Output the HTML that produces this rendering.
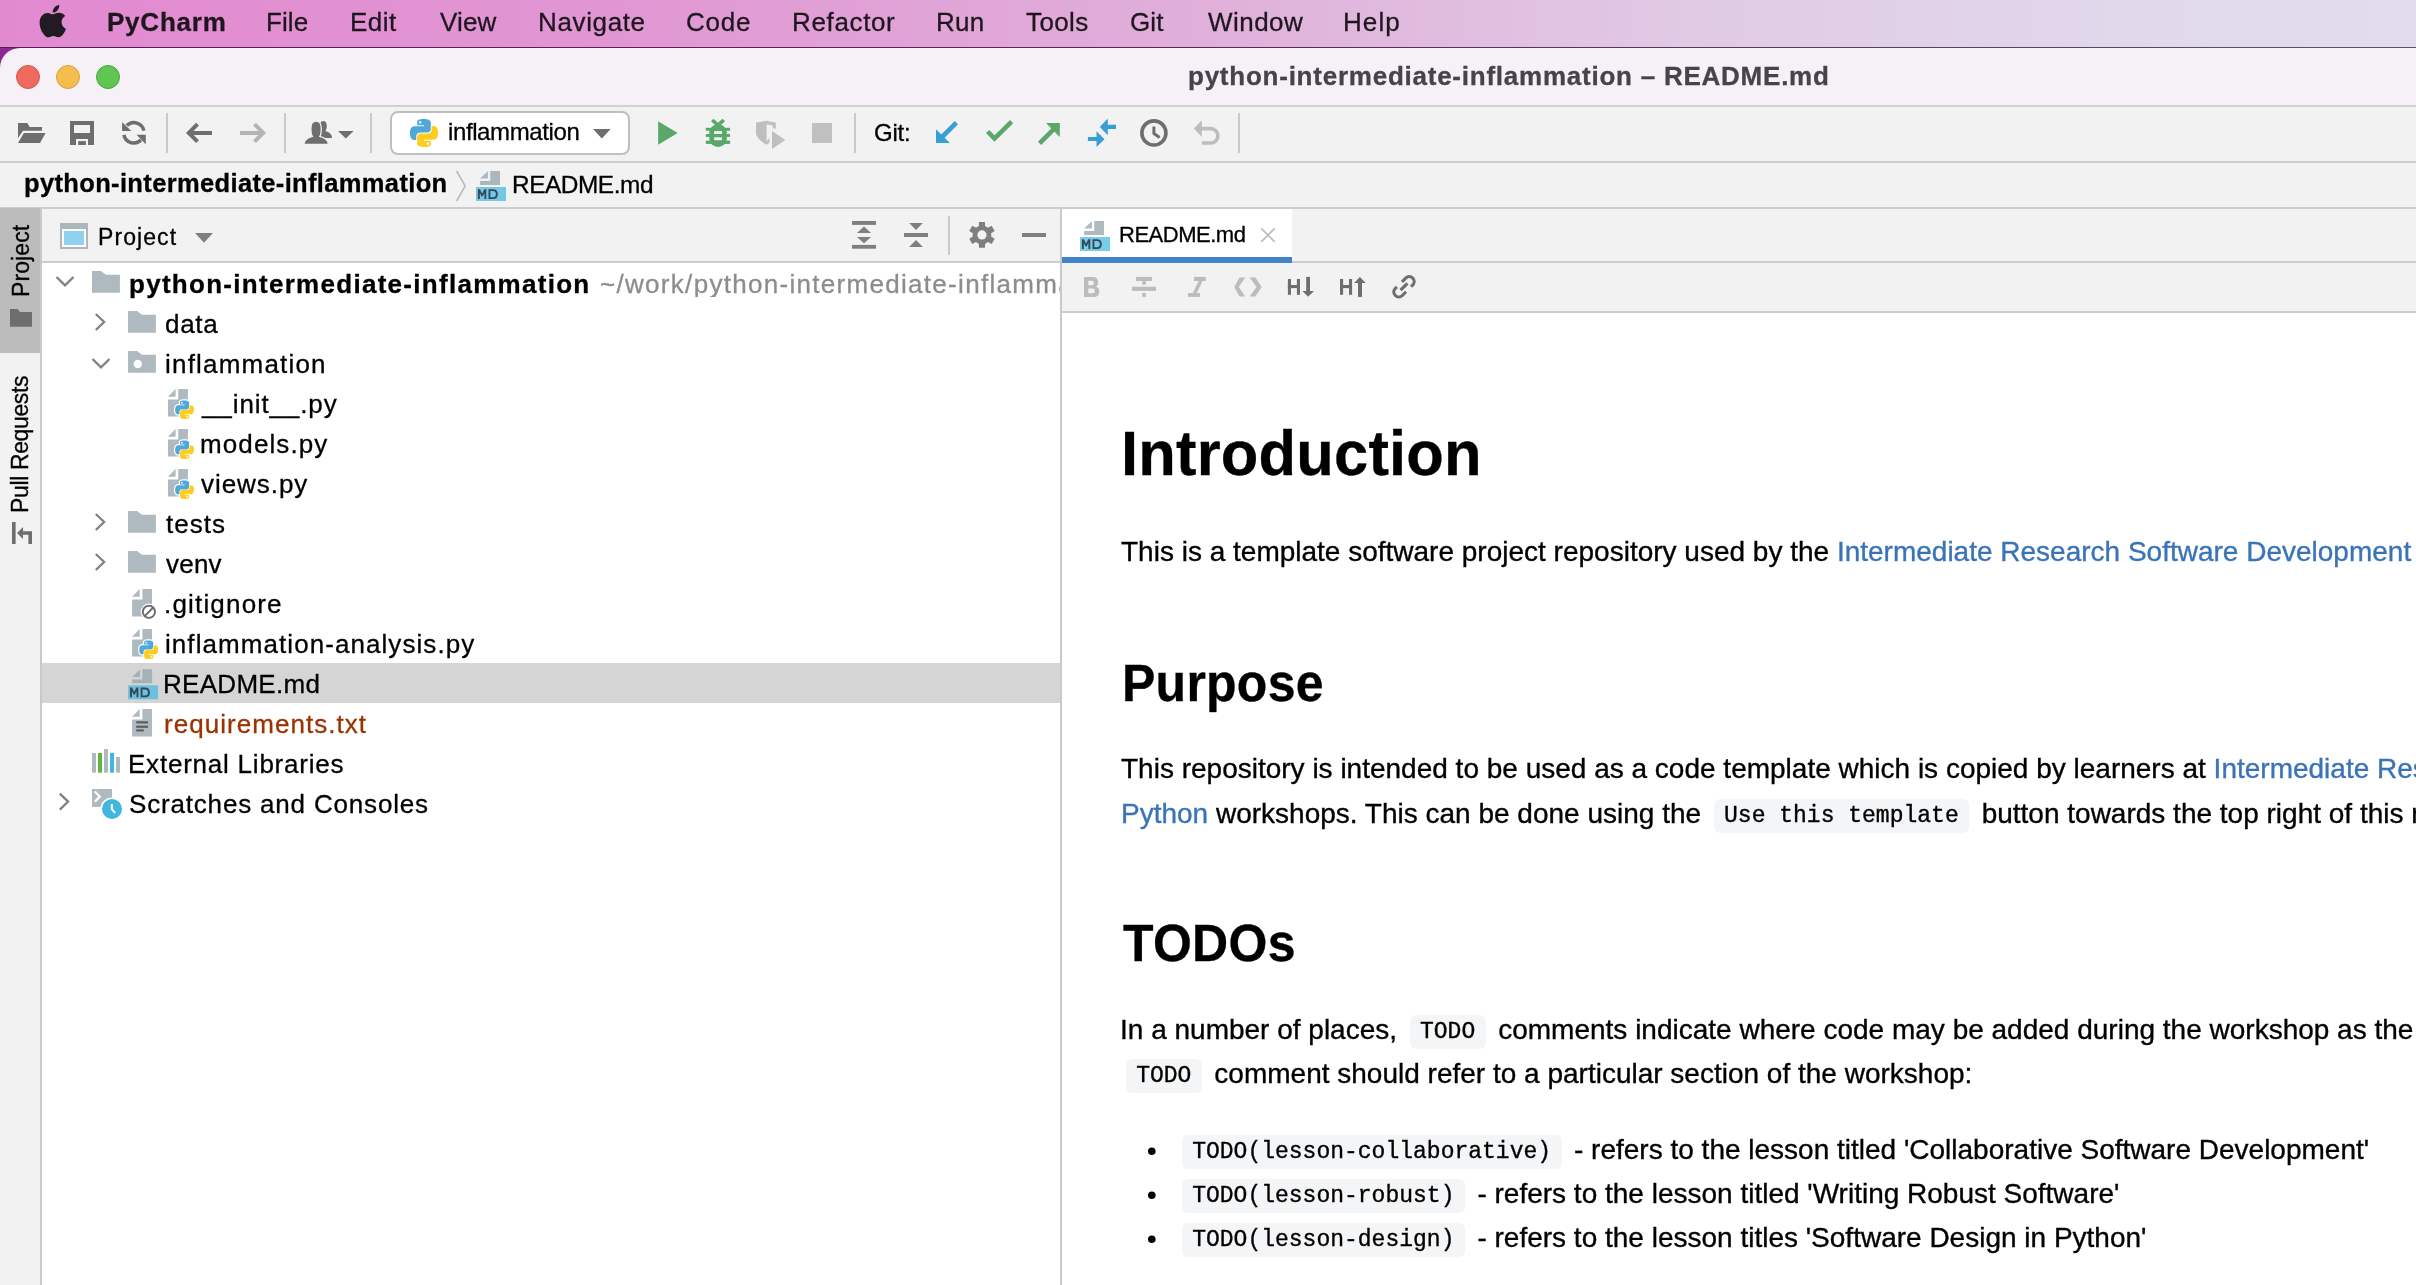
<!DOCTYPE html>
<html><head><meta charset="utf-8"><title>PyCharm</title>
<style>
html,body{margin:0;padding:0;width:2416px;height:1285px;overflow:hidden;background:#ffffff;font-family:"Liberation Sans",sans-serif;}
#root{position:relative;width:2416px;height:1285px;overflow:hidden;}
.t{will-change:transform;-webkit-text-stroke:0.3px currentColor;}
</style></head><body><div id="root">
<div style="position:absolute;left:0px;top:0px;width:2416px;height:48px;background:linear-gradient(90deg,#e28ad0 0%,#e196d3 25%,#e0b0da 50%,#e0cae4 70%,#e1d8ec 88%,#e2dcee 100%);"></div>
<div style="position:absolute;left:0px;top:47px;width:2416px;height:30px;background:linear-gradient(90deg,#8a2a90 0%,#6a2a78 40%,#505064 100%);"></div>
<div style="position:absolute;left:0px;top:46.5px;width:2416px;height:1.5px;background:linear-gradient(90deg,#5a1a5c 0%,#5a2460 50%,#56565e 100%);"></div>
<div class="t" style="position:absolute;left:106.60px;top:8.79px;font-family:'Liberation Sans';font-size:26px;line-height:26px;font-weight:700;color:#1f171f;letter-spacing:0.777px;white-space:pre;">PyCharm</div>
<div class="t" style="position:absolute;left:265.80px;top:8.79px;font-family:'Liberation Sans';font-size:26px;line-height:26px;font-weight:400;color:#1f171f;letter-spacing:0.088px;white-space:pre;">File</div>
<div class="t" style="position:absolute;left:349.70px;top:8.79px;font-family:'Liberation Sans';font-size:26px;line-height:26px;font-weight:400;color:#1f171f;letter-spacing:0.441px;white-space:pre;">Edit</div>
<div class="t" style="position:absolute;left:439.70px;top:8.79px;font-family:'Liberation Sans';font-size:26px;line-height:26px;font-weight:400;color:#1f171f;letter-spacing:0.131px;white-space:pre;">View</div>
<div class="t" style="position:absolute;left:538.00px;top:8.79px;font-family:'Liberation Sans';font-size:26px;line-height:26px;font-weight:400;color:#1f171f;letter-spacing:0.635px;white-space:pre;">Navigate</div>
<div class="t" style="position:absolute;left:686.00px;top:8.79px;font-family:'Liberation Sans';font-size:26px;line-height:26px;font-weight:400;color:#1f171f;letter-spacing:0.801px;white-space:pre;">Code</div>
<div class="t" style="position:absolute;left:791.60px;top:8.79px;font-family:'Liberation Sans';font-size:26px;line-height:26px;font-weight:400;color:#1f171f;letter-spacing:0.642px;white-space:pre;">Refactor</div>
<div class="t" style="position:absolute;left:935.80px;top:8.79px;font-family:'Liberation Sans';font-size:26px;line-height:26px;font-weight:400;color:#1f171f;letter-spacing:0.282px;white-space:pre;">Run</div>
<div class="t" style="position:absolute;left:1026.00px;top:8.79px;font-family:'Liberation Sans';font-size:26px;line-height:26px;font-weight:400;color:#1f171f;letter-spacing:0.376px;white-space:pre;">Tools</div>
<div class="t" style="position:absolute;left:1130.30px;top:8.79px;font-family:'Liberation Sans';font-size:26px;line-height:26px;font-weight:400;color:#1f171f;letter-spacing:0.150px;white-space:pre;">Git</div>
<div class="t" style="position:absolute;left:1207.70px;top:8.79px;font-family:'Liberation Sans';font-size:26px;line-height:26px;font-weight:400;color:#1f171f;letter-spacing:0.461px;white-space:pre;">Window</div>
<div class="t" style="position:absolute;left:1343.20px;top:8.79px;font-family:'Liberation Sans';font-size:26px;line-height:26px;font-weight:400;color:#1f171f;letter-spacing:1.096px;white-space:pre;">Help</div>
<div style="position:absolute;left:0px;top:48px;width:2416px;height:58px;background:#f6f1f7;border-top-left-radius:20px;"></div>
<div style="position:absolute;left:0px;top:105px;width:2416px;height:2px;background:#d3d0d4;"></div>
<div class="t" style="position:absolute;left:1188.00px;top:63.39px;font-family:'Liberation Sans';font-size:26px;line-height:26px;font-weight:700;color:#46434a;letter-spacing:0.761px;white-space:pre;">python-intermediate-inflammation – README.md</div>
<div style="position:absolute;left:0px;top:107px;width:2416px;height:55px;background:#f2f2f2;"></div>
<div style="position:absolute;left:0px;top:161px;width:2416px;height:2px;background:#cdcdcd;"></div>
<div style="position:absolute;left:166px;top:113px;width:2px;height:40px;background:#c9c9c9;"></div>
<div style="position:absolute;left:284px;top:113px;width:2px;height:40px;background:#c9c9c9;"></div>
<div style="position:absolute;left:370px;top:113px;width:2px;height:40px;background:#c9c9c9;"></div>
<div style="position:absolute;left:390px;top:111.2px;width:236px;height:40px;background:#fff;border:2px solid #bfbfbf;border-radius:8px;"></div>
<div class="t" style="position:absolute;left:447.60px;top:120.08px;font-family:'Liberation Sans';font-size:24px;line-height:24px;font-weight:400;color:#000;letter-spacing:-0.392px;white-space:pre;">inflammation</div>
<div style="position:absolute;left:854px;top:113px;width:2px;height:40px;background:#c9c9c9;"></div>
<div class="t" style="position:absolute;left:874.00px;top:120.58px;font-family:'Liberation Sans';font-size:24px;line-height:24px;font-weight:400;color:#000;letter-spacing:-0.223px;white-space:pre;">Git:</div>
<div style="position:absolute;left:1238px;top:113px;width:2px;height:40px;background:#c9c9c9;"></div>
<div style="position:absolute;left:0px;top:163px;width:2416px;height:45px;background:#f2f2f2;"></div>
<div style="position:absolute;left:0px;top:207px;width:2416px;height:2px;background:#cdcdcd;"></div>
<div class="t" style="position:absolute;left:23.80px;top:171.21px;font-family:'Liberation Sans';font-size:25.5px;line-height:25.5px;font-weight:700;color:#000;letter-spacing:0.352px;white-space:pre;">python-intermediate-inflammation</div>
<div class="t" style="position:absolute;left:511.60px;top:172.65px;font-family:'Liberation Sans';font-size:24.4px;line-height:24.4px;font-weight:400;color:#000;letter-spacing:-0.443px;white-space:pre;">README.md</div>
<div style="position:absolute;left:0px;top:209px;width:40px;height:1076px;background:#f2f2f2;"></div>
<div style="position:absolute;left:40px;top:209px;width:2px;height:1076px;background:#c9c9c9;"></div>
<div style="position:absolute;left:0px;top:208px;width:40px;height:144.5px;background:#bcbcbc;"></div>
<div class="t" style="position:absolute;left:9.53px;top:296.80px;transform-origin:0 0;transform:rotate(-90deg);font-family:'Liberation Sans';font-size:23px;line-height:23px;font-weight:400;color:#000;letter-spacing:0.101px;white-space:pre;">Project</div>
<div class="t" style="position:absolute;left:9.13px;top:512.50px;transform-origin:0 0;transform:rotate(-90deg);font-family:'Liberation Sans';font-size:23px;line-height:23px;font-weight:400;color:#000;letter-spacing:-0.367px;white-space:pre;">Pull Requests</div>
<div style="position:absolute;left:42px;top:209px;width:1018px;height:52px;background:#f2f2f2;"></div>
<div style="position:absolute;left:42px;top:261px;width:1018px;height:2px;background:#cdcdcd;"></div>
<div style="position:absolute;left:42px;top:263px;width:1018px;height:1022px;background:#ffffff;"></div>
<div style="position:absolute;left:1060px;top:209px;width:2px;height:1076px;background:#c9c9c9;"></div>
<div class="t" style="position:absolute;left:98.30px;top:225.73px;font-family:'Liberation Sans';font-size:23px;line-height:23px;font-weight:400;color:#000;letter-spacing:1.085px;white-space:pre;">Project</div>
<div style="position:absolute;left:948px;top:216px;width:2px;height:38.5px;background:#c9c9c9;"></div>
<div style="position:absolute;left:42px;top:663px;width:1018px;height:40px;background:#d5d5d5;"></div>
<div class="t" style="position:absolute;left:129.30px;top:270.79px;font-family:'Liberation Sans';font-size:26px;line-height:26px;font-weight:700;color:#000;letter-spacing:1.285px;white-space:pre;">python-intermediate-inflammation</div>
<div class="t" style="position:absolute;left:164.70px;top:310.79px;font-family:'Liberation Sans';font-size:26px;line-height:26px;font-weight:400;color:#000;letter-spacing:0.719px;white-space:pre;">data</div>
<div class="t" style="position:absolute;left:164.70px;top:350.79px;font-family:'Liberation Sans';font-size:26px;line-height:26px;font-weight:400;color:#000;letter-spacing:1.197px;white-space:pre;">inflammation</div>
<div class="t" style="position:absolute;left:202.30px;top:390.79px;font-family:'Liberation Sans';font-size:26px;line-height:26px;font-weight:400;color:#000;letter-spacing:0.894px;white-space:pre;">__init__.py</div>
<div class="t" style="position:absolute;left:200.30px;top:430.79px;font-family:'Liberation Sans';font-size:26px;line-height:26px;font-weight:400;color:#000;letter-spacing:1.100px;white-space:pre;">models.py</div>
<div class="t" style="position:absolute;left:201.30px;top:470.79px;font-family:'Liberation Sans';font-size:26px;line-height:26px;font-weight:400;color:#000;letter-spacing:0.943px;white-space:pre;">views.py</div>
<div class="t" style="position:absolute;left:166.10px;top:510.79px;font-family:'Liberation Sans';font-size:26px;line-height:26px;font-weight:400;color:#000;letter-spacing:1.023px;white-space:pre;">tests</div>
<div class="t" style="position:absolute;left:166.10px;top:550.79px;font-family:'Liberation Sans';font-size:26px;line-height:26px;font-weight:400;color:#000;letter-spacing:0.227px;white-space:pre;">venv</div>
<div class="t" style="position:absolute;left:164.10px;top:590.79px;font-family:'Liberation Sans';font-size:26px;line-height:26px;font-weight:400;color:#000;letter-spacing:1.178px;white-space:pre;">.gitignore</div>
<div class="t" style="position:absolute;left:165.10px;top:630.79px;font-family:'Liberation Sans';font-size:26px;line-height:26px;font-weight:400;color:#000;letter-spacing:1.067px;white-space:pre;">inflammation-analysis.py</div>
<div class="t" style="position:absolute;left:163.40px;top:670.79px;font-family:'Liberation Sans';font-size:26px;line-height:26px;font-weight:400;color:#000;letter-spacing:0.285px;white-space:pre;">README.md</div>
<div class="t" style="position:absolute;left:164.40px;top:710.79px;font-family:'Liberation Sans';font-size:26px;line-height:26px;font-weight:400;color:#993300;letter-spacing:1.041px;white-space:pre;">requirements.txt</div>
<div class="t" style="position:absolute;left:127.90px;top:750.79px;font-family:'Liberation Sans';font-size:26px;line-height:26px;font-weight:400;color:#000;letter-spacing:0.776px;white-space:pre;">External Libraries</div>
<div class="t" style="position:absolute;left:128.90px;top:790.79px;font-family:'Liberation Sans';font-size:26px;line-height:26px;font-weight:400;color:#000;letter-spacing:0.823px;white-space:pre;">Scratches and Consoles</div>
<div class="t" style="position:absolute;left:600.40px;top:270.79px;font-family:'Liberation Sans';font-size:26px;line-height:26px;font-weight:400;color:#8c8c8c;letter-spacing:1.300px;white-space:pre;width:459.60px;overflow:hidden;">~/work/python-intermediate-inflammation</div>
<div style="position:absolute;left:1062px;top:209px;width:1354px;height:52px;background:#f2f2f2;"></div>
<div style="position:absolute;left:1062px;top:261px;width:1354px;height:2px;background:#cdcdcd;"></div>
<div style="position:absolute;left:1062px;top:209px;width:230px;height:48.5px;background:#ffffff;"></div>
<div style="position:absolute;left:1062px;top:257.3px;width:230px;height:5.4px;background:#4083c9;"></div>
<div class="t" style="position:absolute;left:1118.50px;top:224.38px;font-family:'Liberation Sans';font-size:22px;line-height:22px;font-weight:400;color:#000;letter-spacing:-0.483px;white-space:pre;">README.md</div>
<div style="position:absolute;left:1062px;top:263px;width:1354px;height:48px;background:#f2f2f2;"></div>
<div style="position:absolute;left:1062px;top:311px;width:1354px;height:2px;background:#cdcdcd;"></div>
<div style="position:absolute;left:1062px;top:313px;width:1354px;height:972px;background:#ffffff;"></div>
<div class="t" style="position:absolute;left:1121.20px;top:423.34px;font-family:'Liberation Sans';font-size:61.5px;line-height:61.5px;font-weight:700;color:#000;letter-spacing:0.182px;white-space:pre;transform-origin:0 52.06px;transform:scaleY(1.035);">Introduction</div>
<div class="t" style="position:absolute;left:1121px;top:529.50px;font-family:'Liberation Sans';font-size:28px;line-height:44px;color:#000;white-space:pre;-webkit-text-stroke:0.35px currentColor">This is a template software project repository used by the <span style="color:#3a73b7">Intermediate Research Software Development</span></div>
<div class="t" style="position:absolute;left:1122.00px;top:659.38px;font-family:'Liberation Sans';font-size:50px;line-height:50px;font-weight:700;color:#000;letter-spacing:0.243px;white-space:pre;transform-origin:0 42.33px;transform:scaleY(1.05);">Purpose</div>
<div class="t" style="position:absolute;left:1121px;top:747.30px;font-family:'Liberation Sans';font-size:28px;line-height:44px;color:#000;white-space:pre;-webkit-text-stroke:0.35px currentColor">This repository is intended to be used as a code template which is copied by learners at <span style="color:#3a73b7">Intermediate Research Software Development in</span></div>
<div class="t" style="position:absolute;left:1121px;top:791.50px;font-family:'Liberation Sans';font-size:28px;line-height:44px;color:#000;white-space:pre;-webkit-text-stroke:0.35px currentColor"><span style="color:#3a73b7">Python</span> workshops. This can be done using the <span style="display:inline-block;background:#f4f5f7;border-radius:6px;padding:0 10.5px;margin:0 4.7px;height:34px;line-height:34px;font-family:'Liberation Mono';font-size:23px;vertical-align:1.3px">Use this template</span> button towards the top right of this repository.</div>
<div class="t" style="position:absolute;left:1122.80px;top:919.17px;font-family:'Liberation Sans';font-size:50px;line-height:50px;font-weight:700;color:#000;letter-spacing:0.292px;white-space:pre;transform-origin:0 42.33px;transform:scaleY(1.05);">TODOs</div>
<div class="t" style="position:absolute;left:1120px;top:1007.50px;font-family:'Liberation Sans';font-size:28px;line-height:44px;color:#000;white-space:pre;-webkit-text-stroke:0.35px currentColor">In a number of places, <span style="display:inline-block;background:#f4f5f7;border-radius:6px;padding:0 10.5px;margin:0 4.7px;height:34px;line-height:34px;font-family:'Liberation Mono';font-size:23px;vertical-align:1.3px">TODO</span> comments indicate where code may be added during the workshop as the workshop progresses.</div>
<div class="t" style="position:absolute;left:1121px;top:1051.50px;font-family:'Liberation Sans';font-size:28px;line-height:44px;color:#000;white-space:pre;-webkit-text-stroke:0.35px currentColor"><span style="display:inline-block;background:#f4f5f7;border-radius:6px;padding:0 10.5px;margin:0 4.7px;height:34px;line-height:34px;font-family:'Liberation Mono';font-size:23px;vertical-align:1.3px">TODO</span> comment should refer to a particular section of the workshop:</div>
<div class="t" style="position:absolute;left:1177px;top:1128.30px;font-family:'Liberation Sans';font-size:28px;line-height:44px;color:#000;white-space:pre;-webkit-text-stroke:0.35px currentColor"><span style="display:inline-block;background:#f4f5f7;border-radius:6px;padding:0 10.5px;margin:0 4.7px;height:34px;line-height:34px;font-family:'Liberation Mono';font-size:23px;vertical-align:1.3px">TODO(lesson-collaborative)</span> - refers to the lesson titled 'Collaborative Software Development'</div>
<div class="t" style="position:absolute;left:1177px;top:1172.30px;font-family:'Liberation Sans';font-size:28px;line-height:44px;color:#000;white-space:pre;-webkit-text-stroke:0.35px currentColor"><span style="display:inline-block;background:#f4f5f7;border-radius:6px;padding:0 10.5px;margin:0 4.7px;height:34px;line-height:34px;font-family:'Liberation Mono';font-size:23px;vertical-align:1.3px">TODO(lesson-robust)</span> - refers to the lesson titled 'Writing Robust Software'</div>
<div class="t" style="position:absolute;left:1177px;top:1216.30px;font-family:'Liberation Sans';font-size:28px;line-height:44px;color:#000;white-space:pre;-webkit-text-stroke:0.35px currentColor"><span style="display:inline-block;background:#f4f5f7;border-radius:6px;padding:0 10.5px;margin:0 4.7px;height:34px;line-height:34px;font-family:'Liberation Mono';font-size:23px;vertical-align:1.3px">TODO(lesson-design)</span> - refers to the lesson titles 'Software Design in Python'</div>
<svg style="position:absolute;left:0;top:0" width="2416" height="1285" viewBox="0 0 2416 1285">
<g transform="translate(36.6,5) scale(1.35)"><path fill="#231b23" d="M12.152 6.896c-.948 0-2.415-1.078-3.96-1.04-2.04.027-3.91 1.183-4.961 3.014-2.117 3.675-.546 9.103 1.519 12.09 1.013 1.454 2.208 3.09 3.792 3.039 1.52-.065 2.09-.987 3.935-.987 1.831 0 2.35.987 3.96.948 1.637-.026 2.676-1.48 3.676-2.948 1.156-1.688 1.636-3.325 1.662-3.415-.039-.013-3.182-1.221-3.22-4.857-.026-3.04 2.48-4.494 2.597-4.559-1.429-2.09-3.623-2.324-4.39-2.376-2-.156-3.675 1.09-4.61 1.09zM15.53 3.83c.843-1.012 1.4-2.427 1.245-3.83-1.207.052-2.662.805-3.532 1.818-.78.896-1.454 2.338-1.273 3.714 1.338.104 2.715-.688 3.559-1.701"/></g>
<circle cx="28" cy="77" r="11.5" fill="#ee6a5f" stroke="#d8564b" stroke-width="1"/>
<circle cx="68" cy="77" r="11.5" fill="#f5bd4f" stroke="#d9a13a" stroke-width="1"/>
<circle cx="108" cy="77" r="11.5" fill="#61c554" stroke="#45a63c" stroke-width="1"/>
<path fill="#6e6e6e" d="M18 123.1H27.4L29.6 127H42V130.7H23L18 138.1Z"/>
<path fill="#6e6e6e" d="M23.9 133.1H45.6L40 142.9H18Z"/>
<path fill="#6e6e6e" fill-rule="evenodd" d="M70 121H94V145H70ZM74 125V133H90V125ZM76 139V145H88V139Z"/>
<rect x="78.2" y="141.1" width="7.7" height="3.9" fill="#6e6e6e"/>
<path fill="none" stroke="#6e6e6e" stroke-width="3.5" d="M143.9 130.7A10.15 10.15 0 0 0 126.8 125.6"/>
<path fill="#6e6e6e" d="M122.1 122V131.1H131.2Z"/>
<path fill="none" stroke="#6e6e6e" stroke-width="3.5" d="M123.9 134.8A10.15 10.15 0 0 0 141 140.1"/>
<path fill="#6e6e6e" d="M145.8 134.8V144.2L136.5 134.8Z"/>
<path fill="none" stroke="#6e6e6e" stroke-width="4" d="M189 132.9H212M197.5 124.2L188.8 132.9L197.5 141.6"/>
<path fill="none" stroke="#b4b4b4" stroke-width="4" d="M240 132.9H263M254.5 124.2L263.2 132.9L254.5 141.6"/>
<path fill="#6e6e6e" d="M320.6 122.2C321.6 121.3 322.6 120.9 323.6 120.9C325.8 120.9 326.8 123.2 326.8 126.2C326.8 128.4 326.2 129.8 325.3 130.9C329.3 132 332 134.2 332 137.9H321Z"/>
<path fill="#6e6e6e" stroke="#f2f2f2" stroke-width="1.3" d="M303.9 144.3C303.9 140 307.5 137.8 312.4 136.4C311.2 134.8 310.9 132.2 310.9 128.2C310.9 124 313.1 121.1 316.1 121.1C319.1 121.1 321.3 124 321.3 128.2C321.3 132.2 321 134.8 319.8 136.4C324.7 137.8 328.4 140 328.4 144.3Z"/>
<path fill="#6e6e6e" d="M338 131H353.6L345.8 138.5Z"/>
<g transform="translate(410,119) scale(1.1667)"><path d="M14.25.18l.9.2.73.26.59.3.45.32.34.34.25.34.16.33.1.3.04.26.02.2-.01.13V8.5l-.05.63-.13.55-.21.46-.26.38-.3.31-.33.25-.35.19-.35.14-.33.1-.3.07-.26.04-.21.02H8.77l-.69.05-.59.14-.5.22-.41.27-.33.32-.27.35-.2.36-.15.37-.1.35-.07.32-.04.27-.02.21v3.06H3.17l-.21-.03-.28-.07-.32-.12-.35-.18-.36-.26-.36-.36-.35-.46-.32-.59-.28-.73-.21-.88-.14-1.05-.05-1.23.06-1.22.16-1.04.24-.87.32-.71.36-.57.4-.44.42-.33.42-.24.4-.16.36-.1.32-.05.24-.01h.16l.06.01h8.16v-.83H6.18l-.01-2.75-.02-.37.05-.34.11-.31.17-.28.25-.26.31-.23.38-.2.44-.18.51-.15.58-.12.64-.1.71-.06.77-.04.84-.02 1.27.05zm-6.3 1.98l-.23.33-.08.41.08.41.23.34.33.22.41.09.41-.09.33-.22.23-.34.08-.41-.08-.41-.23-.33-.33-.22-.41-.09-.41.09z" fill="#4fa8d8" fill-rule="evenodd"/><path d="M21.04 6.11l.28.06.32.12.35.18.36.27.36.35.35.47.32.59.28.73.21.88.14 1.04.05 1.23-.06 1.23-.16 1.04-.24.86-.32.71-.36.57-.4.45-.42.33-.42.24-.4.16-.36.09-.32.05-.24.02-.16-.01h-8.22v.82h5.84l.01 2.76.02.36-.05.34-.11.31-.17.29-.25.25-.31.24-.38.2-.44.17-.51.15-.58.13-.64.09-.71.07-.77.04-.84.01-1.27-.04-1.07-.14-.9-.2-.73-.25-.59-.3-.45-.33-.34-.34-.25-.34-.16-.33-.1-.3-.04-.25-.02-.2.01-.13v-5.34l.05-.64.13-.54.21-.46.26-.38.3-.32.33-.24.35-.2.35-.14.33-.1.3-.06.26-.04.21-.02.13-.01h5.84l.69-.05.59-.14.5-.21.41-.28.33-.32.27-.35.2-.36.15-.36.1-.35.07-.32.04-.28.02-.21V6.07h2.09l.14.01zm-6.47 14.25l-.23.33-.08.41.08.41.23.33.33.23.41.08.41-.08.33-.23.23-.33.08-.41-.08-.41-.23-.33-.33-.23-.41-.08-.41.08z" fill="#fecd1f" fill-rule="evenodd"/></g>
<path fill="#6e6e6e" d="M593 129H610.7L601.85 138.5Z"/>
<path fill="#59a869" d="M658.1 121.2L677.7 133L658.1 144.8Z"/>
<g fill="#59a869"><rect x="709.3" y="124.3" width="17.5" height="22.6" rx="8.75" ry="8"/><rect x="705.8" y="127.8" width="24.3" height="2.9"/><rect x="705.8" y="134" width="24.3" height="2.9"/><rect x="705.8" y="140.6" width="24.3" height="3.3"/></g>
<path fill="none" stroke="#59a869" stroke-width="3.6" d="M712.2 120L718 125.2L723.8 120"/>
<rect x="714.1" y="131.1" width="7.9" height="2.9" fill="#f2f2f2"/><rect x="714.1" y="137.3" width="7.9" height="2.9" fill="#f2f2f2"/>
<path fill="#bfbfbf" d="M756 122.5L766.5 120.8L775.8 122.5V128.6H772.7V125.4L766.6 124.3V141L769.6 138.2V142.6L766.5 144.8Q758 140 756 134Z"/>
<path fill="#bfbfbf" d="M772 131.1L785.3 140L772 148.9Z"/>
<rect x="812" y="123" width="20" height="20" fill="#c0c0c0"/>
<path fill="#389fd6" d="M936 129.2V143.1H949.9Z"/><path stroke="#389fd6" stroke-width="4.6" d="M956.4 122.6L941 138"/>
<path fill="none" stroke="#59a869" stroke-width="4.6" d="M987.6 131.5L994.5 138.6L1011.6 121.6"/>
<path fill="#59a869" d="M1046 123H1059.8V136.9Z"/><path stroke="#59a869" stroke-width="4.6" d="M1039.6 143.3L1053.5 129.4"/>
<path fill="#389fd6" d="M1099.8 126.9L1107.8 118.6V135.2ZM1107.5 124.8H1116V129H1107.5ZM1087.9 136.9H1096.8V140.9H1087.9ZM1096.5 131.2L1104.5 139.2L1096.5 147.1Z"/>
<circle cx="1153.9" cy="132.9" r="12.05" fill="none" stroke="#6e6e6e" stroke-width="3.6"/><path fill="none" stroke="#6e6e6e" stroke-width="3" d="M1153.9 126.4V133.4L1159.6 137.4"/>
<path fill="none" stroke="#bdbdbd" stroke-width="3.6" d="M1201 128.6H1210.75A7.2 7.2 0 0 1 1210.75 143H1201.8"/><path fill="#bdbdbd" d="M1193.9 128.6L1201.8 120.2V137Z"/>
<path fill="none" stroke="#b5bcc2" stroke-width="1.6" d="M456.6 171L465.2 186L456.6 201"/>
<g transform="translate(476,171)"><path fill="#acb6bd" d="M4.1 7.6L11.9 0.2V7.6ZM14.3 0H24V13.9H4.1V10.1H14.3Z"/><rect x="0" y="16" width="30" height="14" fill="#75c8e5"/><path fill="#34495a" fill-rule="evenodd" d="M1.9 28V18.3H3.95L6.1 22.7L8.25 18.3H10.3V28H8.4V21.9L6.8 25.2H5.4L3.8 21.9V28Z M12.5 18.3H16.8Q21.8 18.3 21.8 23.15Q21.8 28 16.8 28H12.5ZM14.4 20.1V26.2H16.7Q19.9 26.2 19.9 23.15Q19.9 20.1 16.7 20.1Z"/></g>
<path fill="#6e6e6e" d="M10 309H17.5L20 312H32V326.7H10Z"/>
<path fill="#6e6e6e" d="M12 522H15.6V544H12ZM17 533L23 527V531.2H32V544H28.4V534.8H23V539Z"/>
<rect x="60" y="223" width="28" height="26" fill="#acb6bd"/><rect x="62" y="229" width="24" height="18" fill="#fff"/><rect x="64" y="231" width="20" height="14" fill="#8fd2ee"/>
<path fill="#7f7f7f" d="M195 233H213L204 242.8Z"/>
<g fill="#7f7f7f"><rect x="852" y="221" width="24" height="3.9"/><rect x="852" y="244.9" width="24" height="3.8"/><path d="M856.9 232.9H871.1L864 226.5Z M856.9 237H871.1L864 243.3Z"/></g>
<g fill="#7f7f7f"><rect x="904" y="233" width="24" height="4"/><path d="M909.1 223H922.9L916 230Z M909.1 247H922.9L916 240Z"/></g>
<g fill="#7f7f7f" transform="translate(981.96,234.9)"><path d="M-2.95 -12.95H2.95L3.3 -6V6L2.95 12.95H-2.95L-3.3 6V-6Z" transform="rotate(0)"/><path d="M-2.95 -12.95H2.95L3.3 -6V6L2.95 12.95H-2.95L-3.3 6V-6Z" transform="rotate(60)"/><path d="M-2.95 -12.95H2.95L3.3 -6V6L2.95 12.95H-2.95L-3.3 6V-6Z" transform="rotate(120)"/><circle r="9.4"/><circle r="4.6" fill="#f2f2f2"/></g>
<rect x="1022" y="233" width="24" height="4" fill="#7f7f7f"/>
<path fill="none" stroke="#808080" stroke-width="2.3" d="M56.5 277.0L65.0 285.4L73.5 277.0"/>
<path fill="#aeb9c0" d="M92 271H100.9L106 274.7H119.9V292.7H92Z"/>
<path fill="none" stroke="#808080" stroke-width="2.3" d="M95.8 314L104.1 322L95.8 330"/>
<path fill="#aeb9c0" d="M128 311H136.9L142 314.7H155.9V332.7H128Z"/>
<path fill="none" stroke="#808080" stroke-width="2.3" d="M92.5 359.0L101.0 367.4L109.5 359.0"/>
<path fill="#aeb9c0" d="M128 351H136.9L142 354.7H155.9V372.7H128Z"/>
<circle cx="137.8" cy="364" r="4.2" fill="#fff"/>
<path fill="#aeb9c0" d="M168 396.7L175.6 389V396.7ZM178.3 389H187.9V416.6H168V399.5H178.3Z"/>
<g transform="translate(175.2,400.4) scale(0.7792)"><path d="M14.25.18l.9.2.73.26.59.3.45.32.34.34.25.34.16.33.1.3.04.26.02.2-.01.13V8.5l-.05.63-.13.55-.21.46-.26.38-.3.31-.33.25-.35.19-.35.14-.33.1-.3.07-.26.04-.21.02H8.77l-.69.05-.59.14-.5.22-.41.27-.33.32-.27.35-.2.36-.15.37-.1.35-.07.32-.04.27-.02.21v3.06H3.17l-.21-.03-.28-.07-.32-.12-.35-.18-.36-.26-.36-.36-.35-.46-.32-.59-.28-.73-.21-.88-.14-1.05-.05-1.23.06-1.22.16-1.04.24-.87.32-.71.36-.57.4-.44.42-.33.42-.24.4-.16.36-.1.32-.05.24-.01h.16l.06.01h8.16v-.83H6.18l-.01-2.75-.02-.37.05-.34.11-.31.17-.28.25-.26.31-.23.38-.2.44-.18.51-.15.58-.12.64-.1.71-.06.77-.04.84-.02 1.27.05zm-6.3 1.98l-.23.33-.08.41.08.41.23.34.33.22.41.09.41-.09.33-.22.23-.34.08-.41-.08-.41-.23-.33-.33-.22-.41-.09-.41.09zM21.04 6.11l.28.06.32.12.35.18.36.27.36.35.35.47.32.59.28.73.21.88.14 1.04.05 1.23-.06 1.23-.16 1.04-.24.86-.32.71-.36.57-.4.45-.42.33-.42.24-.4.16-.36.09-.32.05-.24.02-.16-.01h-8.22v.82h5.84l.01 2.76.02.36-.05.34-.11.31-.17.29-.25.25-.31.24-.38.2-.44.17-.51.15-.58.13-.64.09-.71.07-.77.04-.84.01-1.27-.04-1.07-.14-.9-.2-.73-.25-.59-.3-.45-.33-.34-.34-.25-.34-.16-.33-.1-.3-.04-.25-.02-.2.01-.13v-5.34l.05-.64.13-.54.21-.46.26-.38.3-.32.33-.24.35-.2.35-.14.33-.1.3-.06.26-.04.21-.02.13-.01h5.84l.69-.05.59-.14.5-.21.41-.28.33-.32.27-.35.2-.36.15-.36.1-.35.07-.32.04-.28.02-.21V6.07h2.09l.14.01zm-6.47 14.25l-.23.33-.08.41.08.41.23.33.33.23.41.08.41-.08.33-.23.23-.33.08-.41-.08-.41-.23-.33-.33-.23-.41-.08-.41.08z" fill="#ffffff" stroke="#ffffff" stroke-width="3.08" stroke-linejoin="round"/><path d="M14.25.18l.9.2.73.26.59.3.45.32.34.34.25.34.16.33.1.3.04.26.02.2-.01.13V8.5l-.05.63-.13.55-.21.46-.26.38-.3.31-.33.25-.35.19-.35.14-.33.1-.3.07-.26.04-.21.02H8.77l-.69.05-.59.14-.5.22-.41.27-.33.32-.27.35-.2.36-.15.37-.1.35-.07.32-.04.27-.02.21v3.06H3.17l-.21-.03-.28-.07-.32-.12-.35-.18-.36-.26-.36-.36-.35-.46-.32-.59-.28-.73-.21-.88-.14-1.05-.05-1.23.06-1.22.16-1.04.24-.87.32-.71.36-.57.4-.44.42-.33.42-.24.4-.16.36-.1.32-.05.24-.01h.16l.06.01h8.16v-.83H6.18l-.01-2.75-.02-.37.05-.34.11-.31.17-.28.25-.26.31-.23.38-.2.44-.18.51-.15.58-.12.64-.1.71-.06.77-.04.84-.02 1.27.05zm-6.3 1.98l-.23.33-.08.41.08.41.23.34.33.22.41.09.41-.09.33-.22.23-.34.08-.41-.08-.41-.23-.33-.33-.22-.41-.09-.41.09z" fill="#4fa8d8" fill-rule="evenodd"/><path d="M21.04 6.11l.28.06.32.12.35.18.36.27.36.35.35.47.32.59.28.73.21.88.14 1.04.05 1.23-.06 1.23-.16 1.04-.24.86-.32.71-.36.57-.4.45-.42.33-.42.24-.4.16-.36.09-.32.05-.24.02-.16-.01h-8.22v.82h5.84l.01 2.76.02.36-.05.34-.11.31-.17.29-.25.25-.31.24-.38.2-.44.17-.51.15-.58.13-.64.09-.71.07-.77.04-.84.01-1.27-.04-1.07-.14-.9-.2-.73-.25-.59-.3-.45-.33-.34-.34-.25-.34-.16-.33-.1-.3-.04-.25-.02-.2.01-.13v-5.34l.05-.64.13-.54.21-.46.26-.38.3-.32.33-.24.35-.2.35-.14.33-.1.3-.06.26-.04.21-.02.13-.01h5.84l.69-.05.59-.14.5-.21.41-.28.33-.32.27-.35.2-.36.15-.36.1-.35.07-.32.04-.28.02-.21V6.07h2.09l.14.01zm-6.47 14.25l-.23.33-.08.41.08.41.23.33.33.23.41.08.41-.08.33-.23.23-.33.08-.41-.08-.41-.23-.33-.33-.23-.41-.08-.41.08z" fill="#fecd1f" fill-rule="evenodd"/></g>
<path fill="#aeb9c0" d="M168 436.7L175.6 429V436.7ZM178.3 429H187.9V456.6H168V439.5H178.3Z"/>
<g transform="translate(175.2,440.4) scale(0.7792)"><path d="M14.25.18l.9.2.73.26.59.3.45.32.34.34.25.34.16.33.1.3.04.26.02.2-.01.13V8.5l-.05.63-.13.55-.21.46-.26.38-.3.31-.33.25-.35.19-.35.14-.33.1-.3.07-.26.04-.21.02H8.77l-.69.05-.59.14-.5.22-.41.27-.33.32-.27.35-.2.36-.15.37-.1.35-.07.32-.04.27-.02.21v3.06H3.17l-.21-.03-.28-.07-.32-.12-.35-.18-.36-.26-.36-.36-.35-.46-.32-.59-.28-.73-.21-.88-.14-1.05-.05-1.23.06-1.22.16-1.04.24-.87.32-.71.36-.57.4-.44.42-.33.42-.24.4-.16.36-.1.32-.05.24-.01h.16l.06.01h8.16v-.83H6.18l-.01-2.75-.02-.37.05-.34.11-.31.17-.28.25-.26.31-.23.38-.2.44-.18.51-.15.58-.12.64-.1.71-.06.77-.04.84-.02 1.27.05zm-6.3 1.98l-.23.33-.08.41.08.41.23.34.33.22.41.09.41-.09.33-.22.23-.34.08-.41-.08-.41-.23-.33-.33-.22-.41-.09-.41.09zM21.04 6.11l.28.06.32.12.35.18.36.27.36.35.35.47.32.59.28.73.21.88.14 1.04.05 1.23-.06 1.23-.16 1.04-.24.86-.32.71-.36.57-.4.45-.42.33-.42.24-.4.16-.36.09-.32.05-.24.02-.16-.01h-8.22v.82h5.84l.01 2.76.02.36-.05.34-.11.31-.17.29-.25.25-.31.24-.38.2-.44.17-.51.15-.58.13-.64.09-.71.07-.77.04-.84.01-1.27-.04-1.07-.14-.9-.2-.73-.25-.59-.3-.45-.33-.34-.34-.25-.34-.16-.33-.1-.3-.04-.25-.02-.2.01-.13v-5.34l.05-.64.13-.54.21-.46.26-.38.3-.32.33-.24.35-.2.35-.14.33-.1.3-.06.26-.04.21-.02.13-.01h5.84l.69-.05.59-.14.5-.21.41-.28.33-.32.27-.35.2-.36.15-.36.1-.35.07-.32.04-.28.02-.21V6.07h2.09l.14.01zm-6.47 14.25l-.23.33-.08.41.08.41.23.33.33.23.41.08.41-.08.33-.23.23-.33.08-.41-.08-.41-.23-.33-.33-.23-.41-.08-.41.08z" fill="#ffffff" stroke="#ffffff" stroke-width="3.08" stroke-linejoin="round"/><path d="M14.25.18l.9.2.73.26.59.3.45.32.34.34.25.34.16.33.1.3.04.26.02.2-.01.13V8.5l-.05.63-.13.55-.21.46-.26.38-.3.31-.33.25-.35.19-.35.14-.33.1-.3.07-.26.04-.21.02H8.77l-.69.05-.59.14-.5.22-.41.27-.33.32-.27.35-.2.36-.15.37-.1.35-.07.32-.04.27-.02.21v3.06H3.17l-.21-.03-.28-.07-.32-.12-.35-.18-.36-.26-.36-.36-.35-.46-.32-.59-.28-.73-.21-.88-.14-1.05-.05-1.23.06-1.22.16-1.04.24-.87.32-.71.36-.57.4-.44.42-.33.42-.24.4-.16.36-.1.32-.05.24-.01h.16l.06.01h8.16v-.83H6.18l-.01-2.75-.02-.37.05-.34.11-.31.17-.28.25-.26.31-.23.38-.2.44-.18.51-.15.58-.12.64-.1.71-.06.77-.04.84-.02 1.27.05zm-6.3 1.98l-.23.33-.08.41.08.41.23.34.33.22.41.09.41-.09.33-.22.23-.34.08-.41-.08-.41-.23-.33-.33-.22-.41-.09-.41.09z" fill="#4fa8d8" fill-rule="evenodd"/><path d="M21.04 6.11l.28.06.32.12.35.18.36.27.36.35.35.47.32.59.28.73.21.88.14 1.04.05 1.23-.06 1.23-.16 1.04-.24.86-.32.71-.36.57-.4.45-.42.33-.42.24-.4.16-.36.09-.32.05-.24.02-.16-.01h-8.22v.82h5.84l.01 2.76.02.36-.05.34-.11.31-.17.29-.25.25-.31.24-.38.2-.44.17-.51.15-.58.13-.64.09-.71.07-.77.04-.84.01-1.27-.04-1.07-.14-.9-.2-.73-.25-.59-.3-.45-.33-.34-.34-.25-.34-.16-.33-.1-.3-.04-.25-.02-.2.01-.13v-5.34l.05-.64.13-.54.21-.46.26-.38.3-.32.33-.24.35-.2.35-.14.33-.1.3-.06.26-.04.21-.02.13-.01h5.84l.69-.05.59-.14.5-.21.41-.28.33-.32.27-.35.2-.36.15-.36.1-.35.07-.32.04-.28.02-.21V6.07h2.09l.14.01zm-6.47 14.25l-.23.33-.08.41.08.41.23.33.33.23.41.08.41-.08.33-.23.23-.33.08-.41-.08-.41-.23-.33-.33-.23-.41-.08-.41.08z" fill="#fecd1f" fill-rule="evenodd"/></g>
<path fill="#aeb9c0" d="M168 476.7L175.6 469V476.7ZM178.3 469H187.9V496.6H168V479.5H178.3Z"/>
<g transform="translate(175.2,480.4) scale(0.7792)"><path d="M14.25.18l.9.2.73.26.59.3.45.32.34.34.25.34.16.33.1.3.04.26.02.2-.01.13V8.5l-.05.63-.13.55-.21.46-.26.38-.3.31-.33.25-.35.19-.35.14-.33.1-.3.07-.26.04-.21.02H8.77l-.69.05-.59.14-.5.22-.41.27-.33.32-.27.35-.2.36-.15.37-.1.35-.07.32-.04.27-.02.21v3.06H3.17l-.21-.03-.28-.07-.32-.12-.35-.18-.36-.26-.36-.36-.35-.46-.32-.59-.28-.73-.21-.88-.14-1.05-.05-1.23.06-1.22.16-1.04.24-.87.32-.71.36-.57.4-.44.42-.33.42-.24.4-.16.36-.1.32-.05.24-.01h.16l.06.01h8.16v-.83H6.18l-.01-2.75-.02-.37.05-.34.11-.31.17-.28.25-.26.31-.23.38-.2.44-.18.51-.15.58-.12.64-.1.71-.06.77-.04.84-.02 1.27.05zm-6.3 1.98l-.23.33-.08.41.08.41.23.34.33.22.41.09.41-.09.33-.22.23-.34.08-.41-.08-.41-.23-.33-.33-.22-.41-.09-.41.09zM21.04 6.11l.28.06.32.12.35.18.36.27.36.35.35.47.32.59.28.73.21.88.14 1.04.05 1.23-.06 1.23-.16 1.04-.24.86-.32.71-.36.57-.4.45-.42.33-.42.24-.4.16-.36.09-.32.05-.24.02-.16-.01h-8.22v.82h5.84l.01 2.76.02.36-.05.34-.11.31-.17.29-.25.25-.31.24-.38.2-.44.17-.51.15-.58.13-.64.09-.71.07-.77.04-.84.01-1.27-.04-1.07-.14-.9-.2-.73-.25-.59-.3-.45-.33-.34-.34-.25-.34-.16-.33-.1-.3-.04-.25-.02-.2.01-.13v-5.34l.05-.64.13-.54.21-.46.26-.38.3-.32.33-.24.35-.2.35-.14.33-.1.3-.06.26-.04.21-.02.13-.01h5.84l.69-.05.59-.14.5-.21.41-.28.33-.32.27-.35.2-.36.15-.36.1-.35.07-.32.04-.28.02-.21V6.07h2.09l.14.01zm-6.47 14.25l-.23.33-.08.41.08.41.23.33.33.23.41.08.41-.08.33-.23.23-.33.08-.41-.08-.41-.23-.33-.33-.23-.41-.08-.41.08z" fill="#ffffff" stroke="#ffffff" stroke-width="3.08" stroke-linejoin="round"/><path d="M14.25.18l.9.2.73.26.59.3.45.32.34.34.25.34.16.33.1.3.04.26.02.2-.01.13V8.5l-.05.63-.13.55-.21.46-.26.38-.3.31-.33.25-.35.19-.35.14-.33.1-.3.07-.26.04-.21.02H8.77l-.69.05-.59.14-.5.22-.41.27-.33.32-.27.35-.2.36-.15.37-.1.35-.07.32-.04.27-.02.21v3.06H3.17l-.21-.03-.28-.07-.32-.12-.35-.18-.36-.26-.36-.36-.35-.46-.32-.59-.28-.73-.21-.88-.14-1.05-.05-1.23.06-1.22.16-1.04.24-.87.32-.71.36-.57.4-.44.42-.33.42-.24.4-.16.36-.1.32-.05.24-.01h.16l.06.01h8.16v-.83H6.18l-.01-2.75-.02-.37.05-.34.11-.31.17-.28.25-.26.31-.23.38-.2.44-.18.51-.15.58-.12.64-.1.71-.06.77-.04.84-.02 1.27.05zm-6.3 1.98l-.23.33-.08.41.08.41.23.34.33.22.41.09.41-.09.33-.22.23-.34.08-.41-.08-.41-.23-.33-.33-.22-.41-.09-.41.09z" fill="#4fa8d8" fill-rule="evenodd"/><path d="M21.04 6.11l.28.06.32.12.35.18.36.27.36.35.35.47.32.59.28.73.21.88.14 1.04.05 1.23-.06 1.23-.16 1.04-.24.86-.32.71-.36.57-.4.45-.42.33-.42.24-.4.16-.36.09-.32.05-.24.02-.16-.01h-8.22v.82h5.84l.01 2.76.02.36-.05.34-.11.31-.17.29-.25.25-.31.24-.38.2-.44.17-.51.15-.58.13-.64.09-.71.07-.77.04-.84.01-1.27-.04-1.07-.14-.9-.2-.73-.25-.59-.3-.45-.33-.34-.34-.25-.34-.16-.33-.1-.3-.04-.25-.02-.2.01-.13v-5.34l.05-.64.13-.54.21-.46.26-.38.3-.32.33-.24.35-.2.35-.14.33-.1.3-.06.26-.04.21-.02.13-.01h5.84l.69-.05.59-.14.5-.21.41-.28.33-.32.27-.35.2-.36.15-.36.1-.35.07-.32.04-.28.02-.21V6.07h2.09l.14.01zm-6.47 14.25l-.23.33-.08.41.08.41.23.33.33.23.41.08.41-.08.33-.23.23-.33.08-.41-.08-.41-.23-.33-.33-.23-.41-.08-.41.08z" fill="#fecd1f" fill-rule="evenodd"/></g>
<path fill="none" stroke="#808080" stroke-width="2.3" d="M95.8 514L104.1 522L95.8 530"/>
<path fill="#aeb9c0" d="M128 511H136.9L142 514.7H155.9V532.7H128Z"/>
<path fill="none" stroke="#808080" stroke-width="2.3" d="M95.8 554L104.1 562L95.8 570"/>
<path fill="#aeb9c0" d="M128 551H136.9L142 554.7H155.9V572.7H128Z"/>
<path fill="#aeb9c0" d="M132.1 596.7L139.7 589V596.7ZM142.4 589H152.0V616.6H132.1V599.5H142.4Z"/>
<circle cx="148.9" cy="611.8" r="8.2" fill="#fff"/><circle cx="148.9" cy="611.8" r="6.1" fill="none" stroke="#6e6e6e" stroke-width="2"/><path stroke="#6e6e6e" stroke-width="2" d="M144.6 616.1L153.2 607.5"/>
<path fill="#aeb9c0" d="M132.1 636.7L139.7 629V636.7ZM142.4 629H152.0V656.6H132.1V639.5H142.4Z"/>
<g transform="translate(139.29999999999998,640.4) scale(0.7792)"><path d="M14.25.18l.9.2.73.26.59.3.45.32.34.34.25.34.16.33.1.3.04.26.02.2-.01.13V8.5l-.05.63-.13.55-.21.46-.26.38-.3.31-.33.25-.35.19-.35.14-.33.1-.3.07-.26.04-.21.02H8.77l-.69.05-.59.14-.5.22-.41.27-.33.32-.27.35-.2.36-.15.37-.1.35-.07.32-.04.27-.02.21v3.06H3.17l-.21-.03-.28-.07-.32-.12-.35-.18-.36-.26-.36-.36-.35-.46-.32-.59-.28-.73-.21-.88-.14-1.05-.05-1.23.06-1.22.16-1.04.24-.87.32-.71.36-.57.4-.44.42-.33.42-.24.4-.16.36-.1.32-.05.24-.01h.16l.06.01h8.16v-.83H6.18l-.01-2.75-.02-.37.05-.34.11-.31.17-.28.25-.26.31-.23.38-.2.44-.18.51-.15.58-.12.64-.1.71-.06.77-.04.84-.02 1.27.05zm-6.3 1.98l-.23.33-.08.41.08.41.23.34.33.22.41.09.41-.09.33-.22.23-.34.08-.41-.08-.41-.23-.33-.33-.22-.41-.09-.41.09zM21.04 6.11l.28.06.32.12.35.18.36.27.36.35.35.47.32.59.28.73.21.88.14 1.04.05 1.23-.06 1.23-.16 1.04-.24.86-.32.71-.36.57-.4.45-.42.33-.42.24-.4.16-.36.09-.32.05-.24.02-.16-.01h-8.22v.82h5.84l.01 2.76.02.36-.05.34-.11.31-.17.29-.25.25-.31.24-.38.2-.44.17-.51.15-.58.13-.64.09-.71.07-.77.04-.84.01-1.27-.04-1.07-.14-.9-.2-.73-.25-.59-.3-.45-.33-.34-.34-.25-.34-.16-.33-.1-.3-.04-.25-.02-.2.01-.13v-5.34l.05-.64.13-.54.21-.46.26-.38.3-.32.33-.24.35-.2.35-.14.33-.1.3-.06.26-.04.21-.02.13-.01h5.84l.69-.05.59-.14.5-.21.41-.28.33-.32.27-.35.2-.36.15-.36.1-.35.07-.32.04-.28.02-.21V6.07h2.09l.14.01zm-6.47 14.25l-.23.33-.08.41.08.41.23.33.33.23.41.08.41-.08.33-.23.23-.33.08-.41-.08-.41-.23-.33-.33-.23-.41-.08-.41.08z" fill="#ffffff" stroke="#ffffff" stroke-width="3.08" stroke-linejoin="round"/><path d="M14.25.18l.9.2.73.26.59.3.45.32.34.34.25.34.16.33.1.3.04.26.02.2-.01.13V8.5l-.05.63-.13.55-.21.46-.26.38-.3.31-.33.25-.35.19-.35.14-.33.1-.3.07-.26.04-.21.02H8.77l-.69.05-.59.14-.5.22-.41.27-.33.32-.27.35-.2.36-.15.37-.1.35-.07.32-.04.27-.02.21v3.06H3.17l-.21-.03-.28-.07-.32-.12-.35-.18-.36-.26-.36-.36-.35-.46-.32-.59-.28-.73-.21-.88-.14-1.05-.05-1.23.06-1.22.16-1.04.24-.87.32-.71.36-.57.4-.44.42-.33.42-.24.4-.16.36-.1.32-.05.24-.01h.16l.06.01h8.16v-.83H6.18l-.01-2.75-.02-.37.05-.34.11-.31.17-.28.25-.26.31-.23.38-.2.44-.18.51-.15.58-.12.64-.1.71-.06.77-.04.84-.02 1.27.05zm-6.3 1.98l-.23.33-.08.41.08.41.23.34.33.22.41.09.41-.09.33-.22.23-.34.08-.41-.08-.41-.23-.33-.33-.22-.41-.09-.41.09z" fill="#4fa8d8" fill-rule="evenodd"/><path d="M21.04 6.11l.28.06.32.12.35.18.36.27.36.35.35.47.32.59.28.73.21.88.14 1.04.05 1.23-.06 1.23-.16 1.04-.24.86-.32.71-.36.57-.4.45-.42.33-.42.24-.4.16-.36.09-.32.05-.24.02-.16-.01h-8.22v.82h5.84l.01 2.76.02.36-.05.34-.11.31-.17.29-.25.25-.31.24-.38.2-.44.17-.51.15-.58.13-.64.09-.71.07-.77.04-.84.01-1.27-.04-1.07-.14-.9-.2-.73-.25-.59-.3-.45-.33-.34-.34-.25-.34-.16-.33-.1-.3-.04-.25-.02-.2.01-.13v-5.34l.05-.64.13-.54.21-.46.26-.38.3-.32.33-.24.35-.2.35-.14.33-.1.3-.06.26-.04.21-.02.13-.01h5.84l.69-.05.59-.14.5-.21.41-.28.33-.32.27-.35.2-.36.15-.36.1-.35.07-.32.04-.28.02-.21V6.07h2.09l.14.01zm-6.47 14.25l-.23.33-.08.41.08.41.23.33.33.23.41.08.41-.08.33-.23.23-.33.08-.41-.08-.41-.23-.33-.33-.23-.41-.08-.41.08z" fill="#fecd1f" fill-rule="evenodd"/></g>
<g transform="translate(128.1,669.3)"><path fill="#a6b0b7" d="M4.1 7.6L11.9 0.2V7.6ZM14.3 0H24V13.9H4.1V10.1H14.3Z"/><rect x="0" y="16" width="30" height="14" fill="#6dbfdd"/><path fill="#34495a" fill-rule="evenodd" d="M1.9 28V18.3H3.95L6.1 22.7L8.25 18.3H10.3V28H8.4V21.9L6.8 25.2H5.4L3.8 21.9V28Z M12.5 18.3H16.8Q21.8 18.3 21.8 23.15Q21.8 28 16.8 28H12.5ZM14.4 20.1V26.2H16.7Q19.9 26.2 19.9 23.15Q19.9 20.1 16.7 20.1Z"/></g>
<path fill="#aeb9c0" d="M132.1 716.7L139.7 709V716.7ZM142.4 709H152.0V736.6H132.1V719.5H142.4Z"/>
<g fill="#5a5a5a"><rect x="136.2" y="721.3" width="11.8" height="2.1"/><rect x="136.2" y="725.7" width="11.8" height="2.1"/><rect x="136.2" y="729.4" width="7.5" height="2"/></g>
<g><rect x="92" y="753" width="4" height="19.7" fill="#aeb9c0"/><rect x="98" y="753" width="4" height="19.7" fill="#62b543"/><rect x="104" y="749" width="4" height="23.7" fill="#aeb9c0"/><rect x="110" y="753" width="4" height="19.7" fill="#40b6e0"/><rect x="116" y="757" width="4" height="15.7" fill="#aeb9c0"/></g>
<path fill="none" stroke="#808080" stroke-width="2.3" d="M59.8 793.6L68.1 801.6L59.8 809.6"/>
<rect x="92" y="789" width="20" height="17.9" fill="#aeb9c0"/><path fill="none" stroke="#fff" stroke-width="2.3" d="M94.8 791.5L99.8 796.7L94.8 801.6"/><circle cx="112" cy="809" r="11.5" fill="#fff"/><circle cx="112" cy="809" r="10" fill="#40b6e0"/><path fill="none" stroke="#fff" stroke-width="2" d="M111.8 804V809.2L115.1 812.9"/>
<g transform="translate(1080,221)"><path fill="#aeb9c0" d="M4.1 7.6L11.9 0.2V7.6ZM14.3 0H24V13.9H4.1V10.1H14.3Z"/><rect x="0" y="16" width="30" height="14" fill="#79cce9"/><path fill="#34495a" fill-rule="evenodd" d="M1.9 28V18.3H3.95L6.1 22.7L8.25 18.3H10.3V28H8.4V21.9L6.8 25.2H5.4L3.8 21.9V28Z M12.5 18.3H16.8Q21.8 18.3 21.8 23.15Q21.8 28 16.8 28H12.5ZM14.4 20.1V26.2H16.7Q19.9 26.2 19.9 23.15Q19.9 20.1 16.7 20.1Z"/></g>
<path stroke="#b7bdc3" stroke-width="1.7" d="M1261.2 228.3L1274.7 241.8M1274.7 228.3L1261.2 241.8"/>
<path fill="#bcbcbc" fill-rule="evenodd" d="M1084 277H1092.3Q1098.2 277 1098.2 282.2Q1098.2 285.6 1095.6 286.6Q1099.3 287.6 1099.3 291.8Q1099.3 297 1093.2 297H1084ZM1088.3 280.7V285.2H1091.9Q1093.9 285.2 1093.9 282.95Q1093.9 280.7 1091.9 280.7ZM1088.3 288.6V293.3H1092.6Q1094.9 293.3 1094.9 290.95Q1094.9 288.6 1092.6 288.6Z"/>
<g fill="#bcbcbc"><rect x="1136" y="276.9" width="15.9" height="4.1"/><rect x="1142.3" y="281" width="3.6" height="3.7"/><rect x="1132.1" y="286.7" width="23.9" height="4.2"/><rect x="1142.3" y="293" width="3.6" height="3.9"/></g>
<g fill="#bcbcbc"><rect x="1194" y="276.9" width="11.9" height="4.1"/><rect x="1188" y="293" width="12" height="3.9"/><path d="M1198.7 281H1202.6L1196.6 293H1192.8Z"/></g>
<path fill="#bcbcbc" d="M1239.5 277.4H1245.2L1238.8 287L1245.2 296.6H1239.5L1234.2 287ZM1255.3 277.4H1249.6L1256.6 287L1249.6 296.6H1255.3L1261.8 287Z"/>
<g fill="#6e6e6e"><rect x="1287.9" y="279" width="3.1" height="15.8"/><rect x="1296.9" y="279" width="3.1" height="15.8"/><rect x="1287.9" y="285" width="12" height="3.1"/><rect x="1306.2" y="276.9" width="3.8" height="14.6"/><path d="M1302.4 291H1314L1308.1 296.8Z"/></g>
<g fill="#6e6e6e"><rect x="1340" y="279" width="3.1" height="15.8"/><rect x="1349" y="279" width="3.1" height="15.8"/><rect x="1340" y="285" width="12" height="3.1"/><rect x="1358" y="282.5" width="4" height="14.4"/><path d="M1354.1 283H1365.7L1359.9 276.9Z"/></g>
<g transform="translate(1404,286.8) rotate(-45) scale(1.15)" fill="none" stroke="#6e6e6e" stroke-width="2.7"><path d="M1.8 -4.3H6.4A4.3 4.3 0 0 1 6.4 4.3H4.4"/><path d="M-1.8 4.3H-6.4A4.3 4.3 0 0 1 -6.4 -4.3H-4.4"/><path d="M-4.2 0H4.2"/></g>
<circle cx="1151.8" cy="1151.2" r="3.8" fill="#000"/>
<circle cx="1151.8" cy="1195.2" r="3.8" fill="#000"/>
<circle cx="1151.8" cy="1239.2" r="3.8" fill="#000"/>
</svg>
</div></body></html>
